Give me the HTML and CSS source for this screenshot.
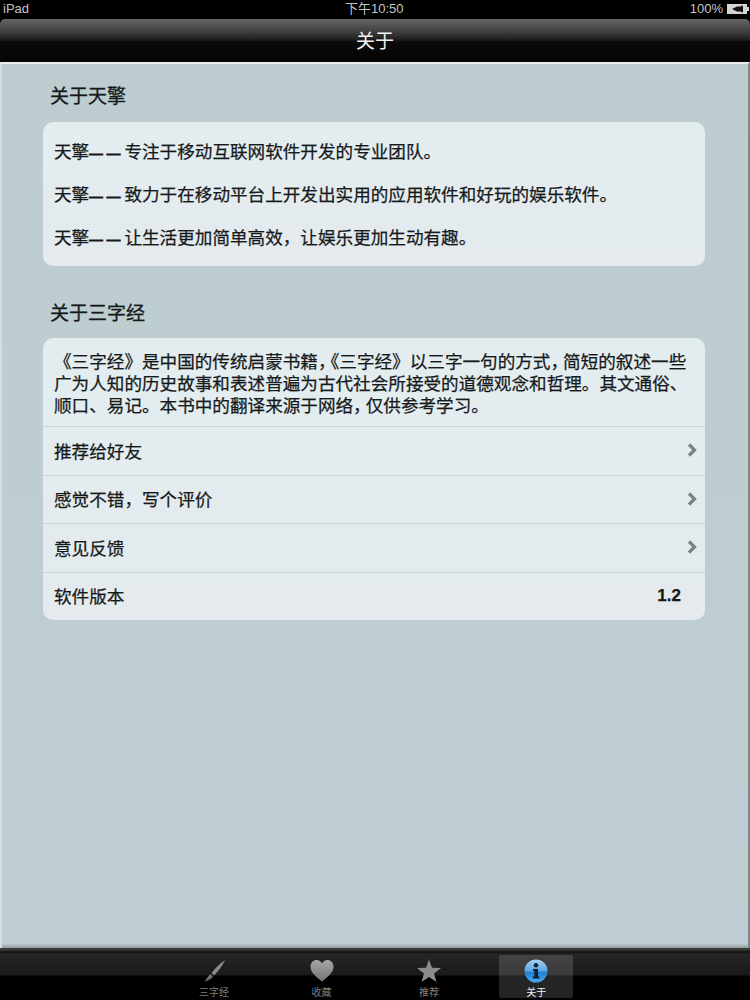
FILE: index.html
```html
<!DOCTYPE html>
<html lang="zh-CN">
<head>
  <meta charset="UTF-8">
  <meta name="viewport" content="width=device-width, initial-scale=1.0">
  <title>关于</title>
  <link rel="stylesheet" href="styles.css">
</head>
<body>
  <div class="status-bar">
    <span class="status-left">iPad</span>
    <span class="status-time">下午10:50</span>
    <span class="status-right">100%
      <svg class="battery" width="22" height="10" viewBox="0 0 22 10">
        <rect x="0" y="0" width="20" height="10" fill="#d4d4d4"/>
        <rect x="20" y="3" width="2" height="4" fill="#d4d4d4"/>
        <path d="M5 5 L10 2.5 H14 V1.8 H16 V8.2 H14 V7.5 H10 Z" fill="#111"/>
      </svg>
    </span>
  </div>

  <div class="nav-bar">关于</div>

  <div class="content">
    <h2 class="section-title">关于天擎</h2>
    <div class="card intro-card">
      <p>天擎<span class="dash">——</span>专注于移动互联网软件开发的专业团队。</p>
      <p>天擎<span class="dash">——</span>致力于在移动平台上开发出实用的应用软件和好玩的娱乐软件。</p>
      <p>天擎<span class="dash">——</span>让生活更加简单高效，让娱乐更加生动有趣。</p>
    </div>

    <h2 class="section-title second">关于三字经</h2>
    <div class="card">
      <div class="about-text">《三字经》是中国的传统启蒙书籍<span class="comma">，</span>《三字经》以三字一句的方式<span class="comma">，</span>简短的叙述一些<br>广为人知的历史故事和表述普遍为古代社会所接受的道德观念和哲理。其文通俗、<br>顺口、易记。本书中的翻译来源于网络<span class="comma">，</span>仅供参考学习。</div>
      <div class="row">
        <span>推荐给好友</span>
        <svg class="chevron" width="10" height="14" viewBox="0 0 10 14"><path d="M2 1.5 L7.5 7 L2 12.5" fill="none" stroke="#7b8186" stroke-width="3.2"/></svg>
      </div>
      <div class="row">
        <span>感觉不错，写个评价</span>
        <svg class="chevron" width="10" height="14" viewBox="0 0 10 14"><path d="M2 1.5 L7.5 7 L2 12.5" fill="none" stroke="#7b8186" stroke-width="3.2"/></svg>
      </div>
      <div class="row">
        <span>意见反馈</span>
        <svg class="chevron" width="10" height="14" viewBox="0 0 10 14"><path d="M2 1.5 L7.5 7 L2 12.5" fill="none" stroke="#7b8186" stroke-width="3.2"/></svg>
      </div>
      <div class="row">
        <span>软件版本</span>
        <span class="version">1.2</span>
      </div>
    </div>
  </div>

  <div class="tab-bar">
    <div class="tab">
      <svg width="26" height="24" viewBox="0 0 26 24">
        <path d="M24 1 C20 4 14 9 10.5 14 L13 16.5 C17 12.5 22 6 24 1 Z" fill="#8a8a8a"/>
        <path d="M9.5 15 L12 17.5 C10.5 20 7.5 21.5 3.5 22.5 C5.5 20.5 6.5 17 9.5 15 Z" fill="#6e6e6e"/>
      </svg>
      <span>三字经</span>
    </div>
    <div class="tab">
      <svg width="26" height="24" viewBox="0 0 26 24">
        <defs>
          <linearGradient id="tabGrey" x1="0" y1="0" x2="0" y2="1">
            <stop offset="0" stop-color="#a6a6a6"/>
            <stop offset="1" stop-color="#757575"/>
          </linearGradient>
        </defs>
        <path d="M13 22.5 C6 17 1.5 13 1.5 7.5 C1.5 3.5 4.5 1 7.5 1 C10 1 12 2.2 13 4.5 C14 2.2 16 1 18.5 1 C21.5 1 24.5 3.5 24.5 7.5 C24.5 13 20 17 13 22.5 Z" fill="url(#tabGrey)"/>
      </svg>
      <span>收藏</span>
    </div>
    <div class="tab">
      <svg width="26" height="24" viewBox="0 0 26 24">
        <path d="M13 0.5 L16 8.8 L25 9 L18 14.4 L20.5 23 L13 18 L5.5 23 L8 14.4 L1 9 L10 8.8 Z" fill="#8c8c8c"/>
      </svg>
      <span>推荐</span>
    </div>
    <div class="tab active">
      <svg width="26" height="24" viewBox="0 0 26 24">
        <defs>
          <linearGradient id="tabBlue" x1="0" y1="0" x2="0" y2="1">
            <stop offset="0" stop-color="#a4d0f2"/>
            <stop offset="0.5" stop-color="#5aa6e4"/>
            <stop offset="0.55" stop-color="#1f7fd6"/>
            <stop offset="1" stop-color="#4aa8ee"/>
          </linearGradient>
        </defs>
        <circle cx="13" cy="12" r="11.5" fill="url(#tabBlue)"/>
        <circle cx="13" cy="6.2" r="2.2" fill="#10202e"/>
        <path d="M10 10 H15 V17.5 H16.5 V19.5 H9.8 V17.5 H11.3 V12 H10 Z" fill="#10202e"/>
      </svg>
      <span>关于</span>
    </div>
  </div>
</body>
</html>
```

FILE: styles.css
```css
html, body {
  margin: 0;
  padding: 0;
}
body {
  width: 750px;
  height: 1000px;
  display: flex;
  flex-direction: column;
  overflow: hidden;
  background: #000;
  font-family: "Liberation Sans", "Noto Sans CJK SC", sans-serif;
}
.status-bar {
  height: 19px;
  flex: none;
  box-sizing: border-box;
  display: flex;
  align-items: center;
  justify-content: space-between;
  padding: 0 1px 2px 3px;
  position: relative;
  background: #000;
  color: #c4c4c4;
  font-size: 13px;
  line-height: 15px;
}
.status-time {
  position: absolute;
  left: 345px;
  top: 1px;
}
.status-right {
  display: flex;
  align-items: center;
  gap: 4px;
}
.nav-bar {
  height: 43px;
  flex: none;
  box-sizing: border-box;
  display: flex;
  align-items: center;
  justify-content: center;
  padding-bottom: 2px;
  border-radius: 5px 5px 0 0;
  background: linear-gradient(to bottom, #666 0, #3e3e3e 30%, #242424 45%, #171717 50%, #0a0a0a 52%, #050505 100%);
  color: #f2f2f2;
  font-size: 19px;
}
.content {
  flex: 1;
  box-sizing: border-box;
  padding: 0 43px 0 41px;
  border-top: 2px solid #eceeee;
  border-left: 2px solid #d6dfe0;
  border-right: 2px solid #78898c;
  background: linear-gradient(to bottom, #bccccf 0, #bfced2 99.5%, #8f9a9a 100%);
}
.section-title {
  margin: 22px 0 14px 7px;
  height: 22px;
  line-height: 22px;
  font-size: 19px;
  font-weight: normal;
  -webkit-text-stroke: 0.3px #15191b;
  color: #15191b;
}
.section-title.second {
  margin: 37px 0 13px 7px;
}
.card {
  border-radius: 10px;
  background: linear-gradient(to bottom, #e3edf0, #e4eaee);
  color: #16191a;
  font-size: 17.6px;
  -webkit-text-stroke: 0.25px #16191a;
  overflow: hidden;
}
.intro-card {
  height: 144px;
  box-sizing: border-box;
  padding: 2px 11px 0;
  display: flex;
  flex-direction: column;
  justify-content: center;
  gap: 21px;
}
.intro-card p {
  margin: 0;
  height: 22px;
  line-height: 22px;
}
.dash {
  font-size: 13.5px;
  line-height: 0;
  letter-spacing: 4.1px;
  -webkit-text-stroke: 0.9px #16191a;
}
.about-text {
  height: 88px;
  box-sizing: border-box;
  padding: 13px 11px 0;
  line-height: 22px;
  white-space: nowrap;
}
.comma {
  letter-spacing: -5px;
}
.row {
  height: 48.5px;
  box-sizing: border-box;
  display: flex;
  align-items: center;
  justify-content: space-between;
  padding: 0 8px 1px 11px;
  border-top: 1.5px solid #ccd4d6;
}
.version {
  margin-right: 16px;
  padding-top: 1px;
  font-size: 17px;
  font-weight: bold;
}
.tab-bar {
  height: 52px;
  flex: none;
  box-sizing: border-box;
  display: flex;
  justify-content: center;
  padding: 7px 0 2px;
  background: linear-gradient(to bottom, #3a3a3a 0, #3a3a3a 2px, #101010 4px, #262626 6px, #1a1a1a 27px, #000 28px, #000 100%);
}
.tab {
  width: 107.5px;
  display: flex;
  flex-direction: column;
  align-items: center;
  gap: 4px;
  padding-top: 4px;
  box-sizing: border-box;
  color: #7e7e7e;
  font-size: 10px;
  line-height: 12px;
}
.tab.active {
  width: 74px;
  margin: 0 16.5px;
  border-radius: 2px;
  background: rgba(255, 255, 255, 0.14);
  color: #f0f0f0;
}
.tab svg {
  flex: none;
}
```
